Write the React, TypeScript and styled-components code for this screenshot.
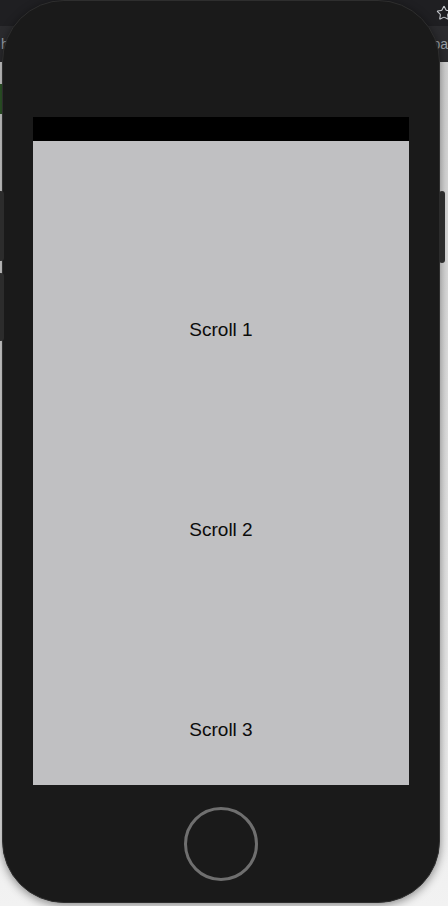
import React from 'react';
import styled, { createGlobalStyle } from 'styled-components';
import { Star } from 'lucide-react';

const GlobalStyle = createGlobalStyle`
  html, body {
    margin: 0;
    padding: 0;
    width: 448px;
    height: 906px;
    overflow: hidden;
    background: #dcdcdc;
    font-family: "Liberation Sans", Arial, sans-serif;
  }
`;

const Stage = styled.div`
  position: relative;
  width: 448px;
  height: 906px;
  overflow: hidden;
  display: flex;
  flex-direction: column;
`;

const TabStrip = styled.div`
  height: 26px;
  background: #1f1f22;
  display: flex;
  justify-content: flex-end;
  align-items: center;
  color: #c4c7cc;
  & > svg {
    margin-right: -4px;
  }
`;

const Toolbar = styled.div`
  height: 36px;
  background: #2b2b2e;
  display: flex;
  justify-content: space-between;
  align-items: center;
  color: #9aa0a6;
  font-size: 14px;
  overflow: hidden;
`;

const Crumb = styled.span<{ $edge: 'left' | 'right' }>`
  ${(p) => (p.$edge === 'left' ? 'margin-left: 1px;' : 'margin-right: 0;')}
`;

const PageArea = styled.div`
  flex: 1;
  background: linear-gradient(#d2d2d2, #e6e6e6 70%, #f2f2f2);
  display: flex;
  flex-direction: column;
  padding-top: 22px;
`;

const GreenChip = styled.div`
  width: 3px;
  height: 30px;
  background: #2f5a2a;
`;

const Phone = styled.div`
  position: absolute;
  left: 2px;
  top: 0;
  width: 438px;
  height: 903px;
  box-sizing: border-box;
  border-radius: 62px;
  background: #1a1a1a;
  border: 1px solid #2e2e2e;
  box-shadow: 0 2px 10px rgba(0, 0, 0, 0.45);
  display: flex;
  flex-direction: column;
  align-items: center;
  padding-top: 116px;
`;

const SideButton = styled.div<{ $side: 'left' | 'right'; $top: number; $h: number }>`
  position: absolute;
  top: ${(p) => p.$top}px;
  height: ${(p) => p.$h}px;
  width: 6px;
  border-radius: 3px;
  background: #2c2c2c;
  ${(p) => (p.$side === 'left' ? 'left: -5px;' : 'right: -6px;')}
`;

const Screen = styled.div`
  width: 376px;
  height: 668px;
  display: flex;
  flex-direction: column;
  overflow: hidden;
  background: #c0c0c2;
`;

const StatusBar = styled.div`
  height: 24px;
  flex-shrink: 0;
  background: #000;
`;

const ScrollContent = styled.div`
  flex: 1;
  overflow: hidden;
  padding-top: 89px;
  display: flex;
  flex-direction: column;
`;

const Section = styled.div`
  height: 200px;
  flex-shrink: 0;
  display: flex;
  align-items: center;
  justify-content: center;
  font-size: 19px;
  color: #0c0c0c;
`;

const HomeArea = styled.div`
  flex: 1;
  display: flex;
  align-items: center;
  justify-content: center;
`;

const HomeButton = styled.div`
  width: 68px;
  height: 68px;
  border-radius: 50%;
  border: 3px solid #6f6f6f;
`;

export default function App() {
  return (
    <>
      <GlobalStyle />
      <Stage>
        <TabStrip>
          <Star size={16} strokeWidth={1.6} />
        </TabStrip>
        <Toolbar>
          <Crumb $edge="left">h</Crumb>
          <Crumb $edge="right">pa</Crumb>
        </Toolbar>
        <PageArea>
          <GreenChip />
        </PageArea>
        <Phone>
          <SideButton $side="left" $top={190} $h={70} />
          <SideButton $side="left" $top={272} $h={68} />
          <SideButton $side="right" $top={190} $h={72} />
          <Screen>
            <StatusBar />
            <ScrollContent>
              {['Scroll 1', 'Scroll 2', 'Scroll 3'].map((label) => (
                <Section key={label}>{label}</Section>
              ))}
            </ScrollContent>
          </Screen>
          <HomeArea>
            <HomeButton />
          </HomeArea>
        </Phone>
      </Stage>
    </>
  );
}
